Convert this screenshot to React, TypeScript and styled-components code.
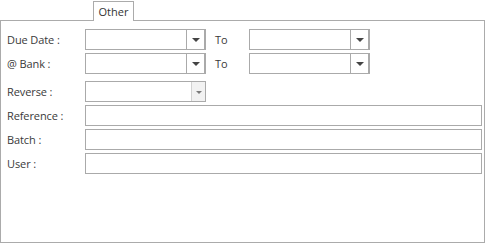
import React from "react";
import styled, { createGlobalStyle } from "styled-components";

const Global = createGlobalStyle`
  html, body { margin: 0; padding: 0; background: #ffffff; }
  body { font-family: "Open Sans", "Noto Sans", sans-serif; font-size: 11px; color: #3a3a3a; }
`;

const Page = styled.div`
  width: 486px;
  height: 244px;
  box-sizing: border-box;
  padding-top: 1px;
`;

const TabStrip = styled.div`
  display: flex;
  height: 19px;
  padding-left: 93px;
  position: relative;
  z-index: 1;
`;

const Tab = styled.div`
  box-sizing: border-box;
  width: 41px;
  height: 20px;
  border: 1px solid #ababab;
  border-bottom: none;
  background: #ffffff;
  display: flex;
  align-items: center;
  justify-content: center;
  color: #333;
  padding-bottom: 1px;
`;

const Panel = styled.div`
  box-sizing: border-box;
  width: 485px;
  height: 223px;
  border: 1px solid #ababab;
  padding: 8px 0 0 6px;
  display: flex;
  flex-direction: column;
`;

const Group = styled.div<{ $mt?: number }>`
  display: flex;
  flex-direction: column;
  gap: 3px;
  margin-top: ${(p) => p.$mt ?? 0}px;
`;

const Row = styled.div`
  display: flex;
  align-items: center;
  height: 21px;
`;

const Label = styled.div`
  width: 78px;
  white-space: nowrap;
  letter-spacing: -0.1px;
`;

const ToLabel = styled.div`
  width: 34px;
  margin-left: 9px;
  color: #3a3a3a;
`;

const Combo = styled.div`
  box-sizing: border-box;
  width: 121px;
  height: 21px;
  border: 1px solid #aaaaaa;
  display: flex;
  background: #fff;
`;

const ComboField = styled.div`
  flex: 1;
`;

const ComboButton = styled.div<{ $light?: boolean }>`
  box-sizing: border-box;
  width: ${(p) => (p.$light ? 14 : 19)}px;
  height: 100%;
  border-left: 1px solid ${(p) => (p.$light ? "#d2d2d2" : "#aaaaaa")};
  border-right: ${(p) => (p.$light ? "none" : "1px solid #aaaaaa")};
  background: ${(p) => (p.$light ? "#f2f2f2" : "#ffffff")};
  display: flex;
  align-items: center;
  justify-content: center;
`;

const Arrow = styled.div<{ $light?: boolean }>`
  width: 0;
  height: 0;
  border-left: ${(p) => (p.$light ? 3 : 4)}px solid transparent;
  border-right: ${(p) => (p.$light ? 3 : 4)}px solid transparent;
  border-top: ${(p) => (p.$light ? 3 : 4)}px solid ${(p) => (p.$light ? "#7a7a7a" : "#444444")};
  margin-top: 1px;
`;

const TextBox = styled.div`
  box-sizing: border-box;
  width: 397px;
  height: 21px;
  border: 1px solid #aaaaaa;
  background: #fff;
`;

const DropDown = ({ light }: { light?: boolean }) => (
  <Combo>
    <ComboField />
    <ComboButton $light={light}>
      <Arrow $light={light} />
    </ComboButton>
  </Combo>
);

export default function App() {
  return (
    <Page>
      <Global />
      <TabStrip>
        <Tab>Other</Tab>
      </TabStrip>
      <Panel>
        <Group>
          <Row>
            <Label>Due Date :</Label>
            <DropDown />
            <ToLabel>To</ToLabel>
            <DropDown />
          </Row>
          <Row>
            <Label>@ Bank :</Label>
            <DropDown />
            <ToLabel>To</ToLabel>
            <DropDown />
          </Row>
        </Group>
        <Group $mt={7}>
          <Row>
            <Label>Reverse :</Label>
            <DropDown light />
          </Row>
          <Row>
            <Label>Reference :</Label>
            <TextBox />
          </Row>
          <Row>
            <Label>Batch :</Label>
            <TextBox />
          </Row>
          <Row>
            <Label>User :</Label>
            <TextBox />
          </Row>
        </Group>
      </Panel>
    </Page>
  );
}
